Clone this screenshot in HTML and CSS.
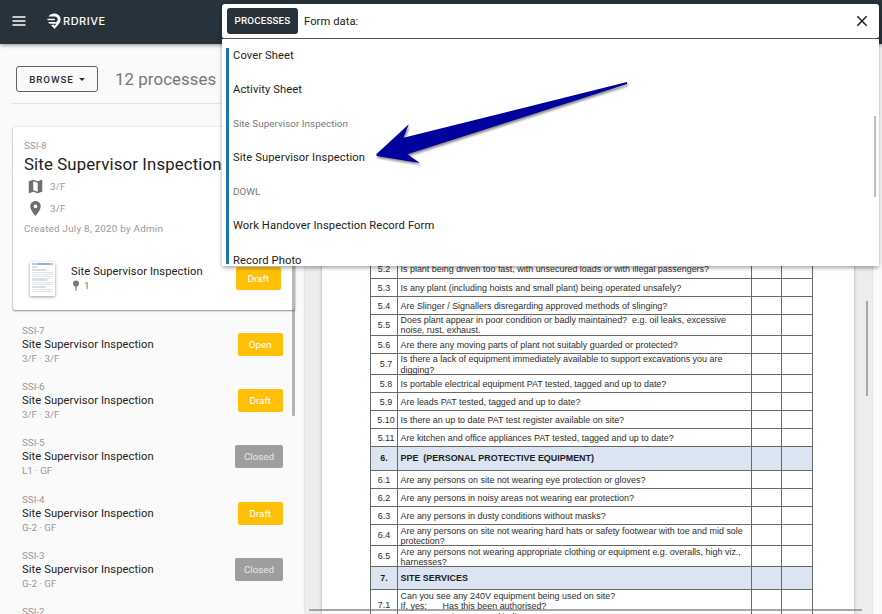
FILE: index.html
```
<!DOCTYPE html>
<html lang="en">
<head>
<meta charset="utf-8">
<title>RDrive</title>
<link rel="stylesheet" href="styles.css">
</head>
<body>
<header class="topbar">
  <svg class="menu-icon" viewBox="0 0 14 12"><path d="M.5 2h13M.5 6h13M.5 10h13" stroke="#fff" stroke-width="1.5"/></svg>
  <svg class="logo" viewBox="0 0 14 17"><path d="M1.600 3.400C3 1.500 5 .6 7.200.6c3.600 0 6.400 2.600 6.400 6 0 2-.8 3.600-2.200 4.900L7.600 16 4 12.200l2.300-.7 1.300 1.200 1.800-2-1.700-1.500c2 0 3.100-1.100 3.100-2.700 0-1.700-1.300-3.100-3.500-3.100z" fill="#fff"/><path d="M.2 5.800h7.200c.8 0 .8 1.500 0 1.500H.8z" fill="#fff"/><path d="M1.400 9h6.600l1.500 1.700H2.800C2 10.700 1.500 10 1.400 9z" fill="#fff"/></svg>
  <span class="wordmark">RDRIVE</span>
</header>
<main class="workspace">
  <aside class="sidebar">
    <div class="toolbar">
      <button class="browse">BROWSE <i class="caret"></i></button>
      <span class="count">12 processes</span>
    </div>
    <section class="card">
      <div class="code">SSI-8</div>
      <h1>Site Supervisor Inspection</h1>
      <div class="place"><svg viewBox="2 2 20 20"><path fill-rule="evenodd" d="M20.500 3l-.16.03L15 5.100 9 3 3.360 4.900c-.21.07-.36.25-.36.48V20.500c0 .28.22.5.5.5l.16-.03L9 18.900l6 2.100 5.640-1.900c.21-.07.36-.25.36-.48V3.500c0-.28-.22-.5-.5-.5zM15 19l-6-2.110V5l6 2.110V19z"/></svg>3/F</div>
      <div class="place pin"><svg viewBox="2 2 20 20"><path d="M12 2C8.130 2 5 5.130 5 9c0 5.250 7 13 7 13s7-7.750 7-13c0-3.870-3.130-7-7-7zm0 9.500a2.500 2.500 0 1 1 0-5 2.500 2.500 0 0 1 0 5z"/></svg>3/F</div>
      <div class="created">Created July 8, 2020 by Admin</div>
      <div class="form">
        <svg class="thumb" viewBox="0 0 25 34"><path d="M0 0h25v34H0z" fill="#fff"/><path d="M2 2h21" stroke="#b4c9e6" stroke-width="2"/><path d="M8 2h12" stroke="#6f98cc"/><path d="M2 5h5M2 8h14M2 18h15M2 25h14" stroke="#b4bfce"/><path d="M2 10.500h21M2 12.500h21M2 14.500h21M2 16.500h19M2 20.500h21M2 22.500h20M2 27.500h21M2 29.500h20" stroke="#dde1e8"/><path d="M18 4v27" stroke="#e3e8ef" stroke-width=".7"/></svg>
        <div class="form-text">
          <div class="name">Site Supervisor Inspection</div>
          <div class="pins"><svg viewBox="0 0 8 12"><circle cx="4" cy="3.500" r="3"/><path d="M3.400 6h1.300l-.2 5h-.8z"/></svg>1</div>
        </div>
        <span class="tag draft">Draft</span>
      </div>
    </section>
    <ul class="list">
      <li><div><div class="code">SSI-7</div><div class="name">Site Supervisor Inspection</div><div class="loc">3/F · 3/F</div></div><span class="tag">Open</span></li>
      <li><div><div class="code">SSI-6</div><div class="name">Site Supervisor Inspection</div><div class="loc">3/F · 3/F</div></div><span class="tag">Draft</span></li>
      <li><div><div class="code">SSI-5</div><div class="name">Site Supervisor Inspection</div><div class="loc">L1 · GF</div></div><span class="tag closed">Closed</span></li>
      <li><div><div class="code">SSI-4</div><div class="name">Site Supervisor Inspection</div><div class="loc">G-2 · GF</div></div><span class="tag">Draft</span></li>
      <li><div><div class="code">SSI-3</div><div class="name">Site Supervisor Inspection</div><div class="loc">G-2 · GF</div></div><span class="tag closed">Closed</span></li>
      <li><div><div class="code">SSI-2</div></div></li>
    </ul>
    <div class="side-thumb"></div>
  </aside>
  <section class="viewer">
    <div class="page">
      <div class="sheet">
        <div class="row first"><b>5.2</b><p>Is plant being driven too fast, with unsecured loads or with illegal passengers?</p><i></i><i></i></div>
        <div class="row"><b>5.3</b><p>Is any plant (including hoists and small plant) being operated unsafely?</p><i></i><i></i></div>
        <div class="row"><b>5.4</b><p>Are Slinger / Signallers disregarding approved methods of slinging?</p><i></i><i></i></div>
        <div class="row two"><b>5.5</b><p>Does plant appear in poor condition or badly maintained?&nbsp; e.g. oil leaks, excessive<br>noise, rust, exhaust.</p><i></i><i></i></div>
        <div class="row"><b>5.6</b><p>Are there any moving parts of plant not suitably guarded or protected?</p><i></i><i></i></div>
        <div class="row two far"><b>5.7</b><p>Is there a lack of equipment immediately available to support excavations you are<br>digging?</p><i></i><i></i></div>
        <div class="row far"><b>5.8</b><p>Is portable electrical equipment PAT tested, tagged and up to date?</p><i></i><i></i></div>
        <div class="row far"><b>5.9</b><p>Are leads PAT tested, tagged and up to date?</p><i></i><i></i></div>
        <div class="row far"><b>5.10</b><p>Is there an up to date PAT test register available on site?</p><i></i><i></i></div>
        <div class="row far"><b>5.11</b><p>Are kitchen and office appliances PAT tested, tagged and up to date?</p><i></i><i></i></div>
        <div class="row head"><b>6.</b><p>PPE&nbsp; (PERSONAL PROTECTIVE EQUIPMENT)</p><i></i><i></i></div>
        <div class="row"><b>6.1</b><p>Are any persons on site not wearing eye protection or gloves?</p><i></i><i></i></div>
        <div class="row"><b>6.2</b><p>Are any persons in noisy areas not wearing ear protection?</p><i></i><i></i></div>
        <div class="row"><b>6.3</b><p>Are any persons in dusty conditions without masks?</p><i></i><i></i></div>
        <div class="row two"><b>6.4</b><p>Are any persons on site not wearing hard hats or safety footwear with toe and mid sole<br>protection?</p><i></i><i></i></div>
        <div class="row two"><b>6.5</b><p>Are any persons not wearing appropriate clothing or equipment e.g. overalls, high viz.,<br>harnesses?</p><i></i><i></i></div>
        <div class="row head"><b>7.</b><p>SITE SERVICES</p><i></i><i></i></div>
        <div class="row three"><b>7.1</b><p>Can you see any 240V equipment being used on site?<br><span class="yes">If, yes:</span>Has this been authorised?<br><span class="yes"></span>Is it connected in-line RCD?</p><i></i><i></i></div>
      </div>
    </div>
    <div class="v-thumb"></div>
    <div class="h-thumb"></div>
  </section>
</main>
<div class="search">
  <div class="search-bar">
    <span class="chip">PROCESSES</span><span class="query">Form data:</span>
    <svg class="close" viewBox="0 0 12 12"><path d="M1.300 1.300l9.400 9.400M10.700 1.300l-9.400 9.400" stroke="#222" stroke-width="1.500"/></svg>
  </div>
  <div class="results">
    <div class="options">
      <div>Cover Sheet</div>
      <div>Activity Sheet</div>
      <div class="group">Site Supervisor Inspection</div>
      <div>Site Supervisor Inspection</div>
      <div class="group dowl">DOWL</div>
      <div>Work Handover Inspection Record Form</div>
      <div>Record Photo</div>
    </div>
    <div class="result-thumb"></div>
  </div>
</div>
<svg class="arrow" viewBox="0 0 270 96"><path d="M267 12L43.500 67.800l5.300-13.500L16.500 84v2l43.300 7-12.300-8.700L267 14z" fill="#00009c"/></svg>
</body>
</html>
```
FILE: styles.css
```
* { box-sizing: border-box; }
body { margin: 0; width: 882px; height: 614px; overflow: hidden; position: relative; display: flex; flex-direction: column; background: #fafafa; font-family: Roboto, sans-serif; font-size: 11.2px; color: #222; }
.topbar { flex: none; height: 44px; background: #27323a; display: flex; align-items: center; padding: 0 12px 2px; box-shadow: 0 1px 4px rgba(0,0,0,.45); position: relative; z-index: 2; }
.menu-icon { width: 14px; height: 12px; }
.logo { width: 14px; height: 17px; margin-left: 21px; }
.wordmark { margin-left: 2px; color: #fff; font: 500 11px/14px Inter, sans-serif; letter-spacing: .5px; }
.workspace { flex: 1; display: flex; min-height: 0; }

.sidebar { width: 305px; flex: none; position: relative; overflow: hidden; }
.toolbar { display: flex; align-items: center; margin: 0 10px 0 11px; padding: 11px 0 0 5px; height: 60px; border-bottom: 1px solid #e4e4e4; }
.browse { width: 82px; height: 26px; border: 1px solid #5b6369; border-radius: 3px; background: none; padding: 1px 0 0; font: 500 9.8px/24px Roboto, sans-serif; letter-spacing: .87px; color: #27323a; display: flex; justify-content: center; align-items: center; gap: 5px; }
.caret { border: 3.500px solid transparent; border-top-color: #27323a; border-bottom: 0; }
.count { margin-left: 17px; font-size: 16.8px; letter-spacing: .1px; color: #777; white-space: nowrap; }
.card { width: 282px; height: 183px; margin: 23px 0 0 13px; padding: 12px 14px 0 11px; background: #fff; border-radius: 2px; box-shadow: 0 1px 2px rgba(0,0,0,.4), 0 0 2px rgba(0,0,0,.14); }
.code, .loc { font-size: 9.8px; line-height: 14px; color: #999; }
.card h1 { margin: 1px 0 0; font-size: 16.8px; line-height: 21px; font-weight: 400; letter-spacing: .13px; white-space: nowrap; }
.place { display: flex; align-items: center; height: 22px; padding-left: 4px; gap: 7px; font-size: 9.8px; letter-spacing: .25px; color: #999; }
.place svg { width: 15px; height: 15px; fill: #6e6e6e; }
.place.pin { padding-top: 1px; }
.created { font-size: 9.8px; line-height: 16px; letter-spacing: .25px; color: #999; margin-top: 2px; }
.form { display: flex; margin-top: 25px; padding-left: 6px; }
.thumb { width: 25px; height: 34px; box-shadow: 0 1px 3px rgba(0,0,0,.4); }
.form-text { margin-left: 16px; flex: 1; padding-top: 3px; }
.name { letter-spacing: .09px; line-height: 14px; white-space: nowrap; }
.pins { display: flex; align-items: center; gap: 4px; color: #777; font-size: 9.8px; line-height: 14px; }
.pins svg { width: 8px; height: 12px; fill: #777; margin-left: 1px; }
.tag { flex: none; width: 45.500px; height: 23px; border-radius: 2px; background: #ffc107; color: #fff; font-size: 9.8px; line-height: 23px; text-align: center; }
.tag.closed { width: 48px; background: #9e9e9e; color: #e8e8e8; }
.tag.draft { margin-top: 5px; }
.list { list-style: none; margin: 14px 0 0; padding: 0 22px; }
.list li { display: flex; justify-content: space-between; align-items: flex-start; height: 56.200px; }
.list .tag { margin-top: 9px; }
.side-thumb { position: absolute; left: 292px; top: 61px; width: 2.500px; height: 311px; background: rgba(0,0,0,.28); border-radius: 1px; }

.viewer { width: 567px; flex: none; position: relative; background: #ededed; padding: 0 18px 0 17px; box-shadow: 0 0 2px rgba(0,0,0,.25); }
.page { height: 570px; overflow: hidden; background: #fff; box-shadow: 0 0 3px rgba(0,0,0,.3); padding: 216px 41px 0 48px; }
.sheet { border-left: 1px solid #686868; font: 8.950px/10.200px "Liberation Sans", sans-serif; color: #2e2e2e; }
.row { display: grid; grid-template-columns: 27px 354px 29.700px 31.800px; height: 18.100px; border-bottom: 1px solid #686868; align-items: center; }
.row > * { border-right: 1px solid #686868; height: 100%; display: block; margin: 0; }
.row > b { font-weight: 400; text-align: center; line-height: 18.500px; }
.row > p { padding-left: 2.500px; white-space: nowrap; line-height: 18.500px; }
.row.first { height: 18.500px; }
.row.two { height: 21.100px; }
.row.two > p { line-height: 10.200px; padding-top: .6px; }
.row.two > b { line-height: 21.500px; }
.row.far > b { padding-left: 4px; }
.row.head { height: 23.300px; background: #dbe5f1; }
.row.head > * { font-weight: 700; line-height: 23.500px; color: #1c1c1c; }
.row.three { height: 54px; }
.row.three > p { line-height: 10.200px; padding-top: .8px; }
.row.three > b { line-height: 31px; }
.yes { display: inline-block; width: 42px; }
.v-thumb { position: absolute; left: 560.500px; top: 257px; width: 2px; height: 95px; background: #a8a8a8; }
.h-thumb { position: absolute; left: 4px; top: 565px; width: 553px; height: 2px; background: rgba(110,110,110,.6); }

.search { position: absolute; z-index: 5; left: 221.500px; top: 4px; width: 657.500px; box-shadow: 0 2px 4px rgba(0,0,0,.35); border-radius: 3px; }
.search-bar { height: 35px; background: #fff; border-radius: 3px; border-bottom: 1px solid #555; display: flex; align-items: center; padding: 0 11.500px 0 5.500px; }
.chip { width: 71px; height: 26px; background: #27323a; border-radius: 3px; color: #fff; font: 500 9.8px/26px Roboto, sans-serif; letter-spacing: .15px; text-align: center; }
.query { margin-left: 6px; flex: 1; letter-spacing: .07px; }
.close { width: 12px; height: 12px; }
.results { position: relative; height: 227px; background: #fff; overflow: hidden; padding: 9px 0 2px 4.500px; }
.options { border-left: 3px solid #1b75b5; height: 216px; padding-left: 4px; }
.options div { height: 34.100px; line-height: 16px; letter-spacing: .1px; white-space: nowrap; }
.options .group { font-size: 9.8px; color: #777; letter-spacing: .06px; }
.result-thumb { position: absolute; right: 3px; top: 77px; width: 2px; height: 81px; background: #bdbdbd; }
.arrow { position: absolute; z-index: 6; left: 360px; top: 70px; width: 270px; height: 96px; overflow: visible; filter: drop-shadow(1px 2px 1px rgba(0,0,0,.45)); }
```
